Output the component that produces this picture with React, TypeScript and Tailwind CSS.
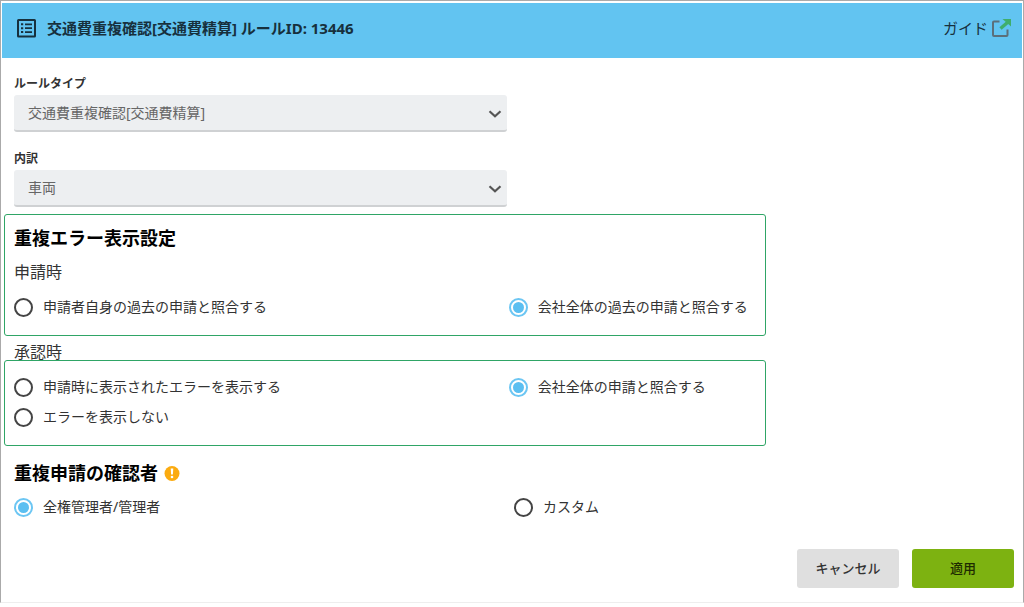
import { useState } from "react";

interface Option {
    value: string;
    label: string;
}

interface RadioRowProps {
    name: string;
    options: Option[];
    value: string;
    onChange: (value: string) => void;
    columns: string;
}

const SUBMIT_OPTIONS: Option[] = [
    { value: "self", label: "申請者自身の過去の申請と照合する" },
    { value: "company", label: "会社全体の過去の申請と照合する" },
]

const APPROVE_OPTIONS: Option[] = [
    { value: "submitted", label: "申請時に表示されたエラーを表示する" },
    { value: "company", label: "会社全体の申請と照合する" },
    { value: "none", label: "エラーを表示しない" },
]

const REVIEWER_OPTIONS: Option[] = [
    { value: "admin", label: "全権管理者/管理者" },
    { value: "custom", label: "カスタム" },
]

const ListIcon = () => (
    <svg viewBox="0 0 20 20" className="h-5 w-5 shrink-0" fill="none" stroke="#17303d" strokeWidth="2" aria-hidden="true">
        <rect x="2" y="2" width="17" height="16.5" rx="0.5" />
        <path d="M9 6.3h7M9 10.2h7M9 14.1h7" strokeWidth="1.8" />
        <path d="M5 6.3h2.2M5 10.2h2.2M5 14.1h2.2" strokeWidth="2" />
    </svg>
)

const ExternalIcon = () => (
    <svg viewBox="0 0 21 20" className="h-5 w-[21px] shrink-0" fill="none" aria-hidden="true">
        <path d="M8.5 3.5H3a1 1 0 0 0-1 1V17a1 1 0 0 0 1 1h12.5a1 1 0 0 0 1-1v-5.5" stroke="#5b6f7a" strokeWidth="2" />
        <path d="M9.5 10.5l7-6" stroke="#3fae6b" strokeWidth="3.4" />
        <path d="M11.5 1H20v7.5z" fill="#3fae6b" />
    </svg>
)

const WarningIcon = () => (
    <svg viewBox="0 0 16 16" className="h-4 w-4 shrink-0" aria-hidden="true">
        <circle cx="8" cy="8.5" r="7.5" fill="#fbab10" />
        <path d="M6.7 3.4h2.6l-.4 6.2H7.1z" fill="#fff" />
        <circle cx="8" cy="12" r="1.3" fill="#fff" />
    </svg>
)

const SelectField = ({ id, label, value }: { id: string; label: string; value: string }) => (
    <div className="w-1/2 pr-[7px]">
        <label htmlFor={id} className="block text-xs leading-[22px] font-bold text-[#333]">{label}</label>
        <div className="relative">
            <select
                id={id}
                className="block h-[37px] w-full appearance-none rounded-[3px] border-b-2 border-[#cfd1d3] bg-[#edeff1] px-[14px] text-sm text-[#666]"
                defaultValue={value}
            >
                <option>{value}</option>
            </select>
            <svg viewBox="0 0 14 8" className="pointer-events-none absolute top-[15px] right-[5px] h-2 w-[14px]" fill="none" aria-hidden="true">
                <path d="M1.5 1.2L7 6.2l5.5-5" stroke="#555" strokeWidth="2.2" />
            </svg>
        </div>
    </div>
)

const RadioRow = ({ name, options, value, onChange, columns }: RadioRowProps) => (
    <div className={`grid gap-y-[6px] ${columns}`}>
        {options.map(option => (
            <label key={option.value} className="flex h-6 items-center gap-[10px] text-sm whitespace-nowrap text-[#333]">
                <input
                    type="radio"
                    name={name}
                    className="h-[19px] w-[19px] shrink-0 appearance-none rounded-full border-2 border-[#444] bg-white checked:border-[#6cc6f3] checked:bg-[#5bbff1] checked:bg-clip-content checked:p-[2px]"
                    checked={value === option.value}
                    onChange={() => onChange(option.value)}
                />
                {option.label}
            </label>
        ))}
    </div>
)

export default function App() {
    const [submitCheck, setSubmitCheck] = useState<string>("company")
    const [approveCheck, setApproveCheck] = useState<string>("company")
    const [reviewer, setReviewer] = useState<string>("admin")

    return (
        <div className="bg-white font-['Noto_Sans','Noto_Sans_CJK_JP',sans-serif]">
            <div className="border border-x-[#aaa] border-t-[#aaa] border-b-[#eee] px-px pt-[2px] pb-[14px]">
                <header className="flex h-[55px] items-start justify-between bg-[#62c4f1] pt-[13px] pr-[10px] pl-[14px] text-[#17303d]">
                    <div className="flex items-center gap-[11px]">
                        <ListIcon />
                        <h1 className="text-[15px] leading-6 font-bold">交通費重複確認[交通費精算] ルールID: 13446</h1>
                    </div>
                    <a href="#guide" className="flex items-center gap-[3px] text-[15px] leading-6">
                        ガイド
                        <ExternalIcon />
                    </a>
                </header>

                <form className="px-[2px]" onSubmit={e => e.preventDefault()}>
                    <div className="space-y-4 pt-[15px] pr-[6px] pb-[7px] pl-[10px]">
                        <SelectField id="rule-type" label="ルールタイプ" value="交通費重複確認[交通費精算]" />
                        <SelectField id="breakdown" label="内訳" value="車両" />
                    </div>

                    <section className="w-3/4 rounded-[3px] border border-[#2fa566] px-[9px] pt-[7px] pb-4">
                        <h2 className="text-lg leading-8 font-bold text-black">重複エラー表示設定</h2>
                        <h3 className="mt-[2px] text-base leading-8 text-[#333]">申請時</h3>
                        <div className="mt-[7px]">
                            <RadioRow name="submit" options={SUBMIT_OPTIONS} value={submitCheck} onChange={setSubmitCheck} columns="grid-cols-[2fr_1fr]" />
                        </div>
                    </section>

                    <h3 className="h-6 px-[10px] text-base leading-8 text-[#333]">承認時</h3>
                    <section className="w-3/4 rounded-[3px] border border-[#2fa566] px-[9px] pt-[14px] pb-4">
                        <RadioRow name="approve" options={APPROVE_OPTIONS} value={approveCheck} onChange={setApproveCheck} columns="grid-cols-[2fr_1fr]" />
                    </section>

                    <section className="pt-[11px] pr-[6px] pl-[10px]">
                        <h2 className="flex items-center gap-[6px] text-lg leading-8 font-bold text-black">
                            重複申請の確認者
                            <WarningIcon />
                        </h2>
                        <div className="mt-[6px]">
                            <RadioRow name="reviewer" options={REVIEWER_OPTIONS} value={reviewer} onChange={setReviewer} columns="grid-cols-2" />
                        </div>
                    </section>

                    <div className="mt-[30px] flex justify-end gap-[13px] pr-[6px]">
                        <button type="button" className="h-[39px] w-[102px] rounded-[3px] bg-[#dfdfdf] text-[13px] font-medium text-[#333]">
                            キャンセル
                        </button>
                        <button type="submit" className="h-[39px] w-[102px] rounded-[3px] bg-[#7db211] text-[13px] font-medium text-[#1d2b00]">
                            適用
                        </button>
                    </div>
                </form>
            </div>
        </div>
    )
}
